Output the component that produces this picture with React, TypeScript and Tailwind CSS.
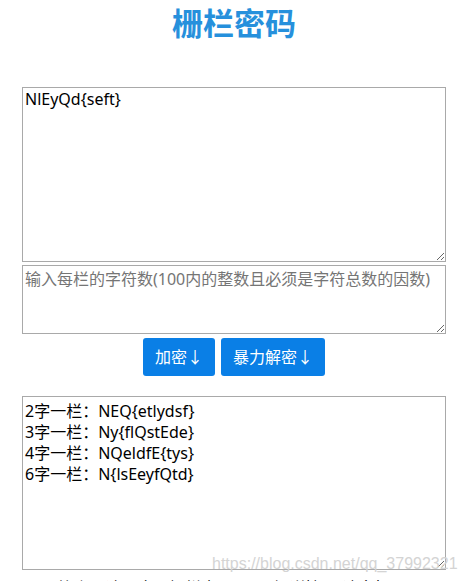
import React from 'react'

const results = [
  '2字一栏：NEQ{etlydsf}',
  '3字一栏：Ny{flQstEde}',
  '4字一栏：NQeldfE{tys}',
  '6字一栏：N{lsEeyfQtd}',
]

const font = { fontFamily: '"Segoe UI", "Noto Sans", "Noto Sans CJK SC", sans-serif' }

export default function App() {
  return (
    <div className="min-h-[581px] bg-white overflow-hidden" style={font}>
      <div className="ml-[22px] w-[424px]">
        {/* Title */}
        <h1 className="h-[87px] pt-[3px] text-center text-[31px] leading-[40px] font-bold text-[#2690dc]">
          栅栏密码
        </h1>

        {/* Plain text input */}
        <textarea
          className="block w-[424px] h-[175px] border border-[#a9a9a9] px-[2px] py-[1px] text-[16px] leading-[21px] text-black resize-y outline-none"
          style={font}
          defaultValue="NlEyQd{seft}"
          spellCheck={false}
        />

        {/* Chars per rail */}
        <textarea
          className="block mt-[3px] w-[424px] h-[69px] border border-[#a9a9a9] px-[2px] py-[3px] text-[16px] leading-[21px] text-black placeholder:text-[#757575] resize-y outline-none"
          style={font}
          placeholder="输入每栏的字符数(100内的整数且必须是字符总数的因数)"
        />

        {/* Buttons */}
        <div className="mt-[4px] flex justify-center gap-[6px]">
          <button className="h-[38px] w-[72px] rounded-[3px] bg-[#0a7fe6] text-[16px] text-white">加密↓</button>
          <button className="h-[38px] w-[104px] rounded-[3px] bg-[#0a7fe6] text-[16px] text-white">暴力解密↓</button>
        </div>

        {/* Output */}
        <div className="relative mt-[20px]">
          <textarea
            className="block w-[424px] h-[174px] border border-[#a9a9a9] px-[2px] py-[4px] text-[16px] leading-[21px] text-black resize-y outline-none"
            style={font}
            defaultValue={results.join('\n')}
            spellCheck={false}
          />
          <span
            className="absolute left-[190px] top-[158px] text-[16px] leading-[20px] text-[#d4d4d4] pointer-events-none whitespace-nowrap"
            style={{ fontFamily: '"Liberation Sans", Arial, sans-serif' }}
          >
            https://blog.csdn.net/qq_37992321
          </span>
        </div>

        <p className="mt-[8px] text-center text-[16px] leading-[21px] text-black whitespace-nowrap">
          简介：请百度《栅栏密码》，了解详情。(请意相互)
        </p>
      </div>
    </div>
  )
}
